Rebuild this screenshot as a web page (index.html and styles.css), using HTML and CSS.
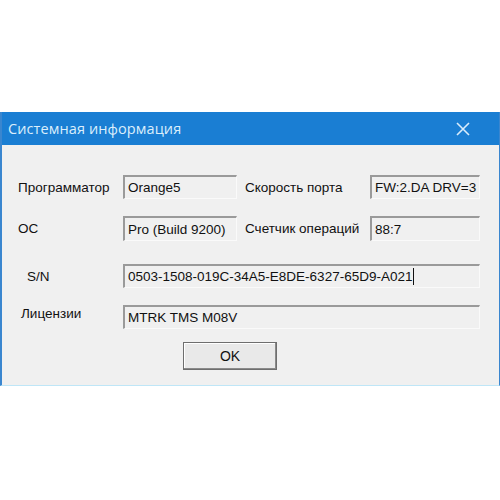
FILE: index.html
```html
<!DOCTYPE html>
<html>
<head>
<meta charset="utf-8">
<link rel="stylesheet" href="styles.css">
</head>
<body>
<div class="window">
  <div class="titlebar">
    <span class="title">Системная информация</span>
    <svg class="close" width="16" height="16" viewBox="0 0 16 16"><path d="M2 2L14 14M14 2L2 14" stroke="#d8ecfb" stroke-width="1.6" fill="none"/></svg>
  </div>
  <div class="content">
    <div class="grid">
      <div class="label l-prog">Программатор</div>
      <div class="field">Orange5</div>
      <div class="label l-right">Скорость порта</div>
      <div class="field">FW:2.DA DRV=3</div>

      <div class="label l-os">ОС</div>
      <div class="field">Pro (Build 9200)</div>
      <div class="label l-right">Счетчик операций</div>
      <div class="field">88:7</div>
    </div>
    <div class="grid grid-wide">
      <div class="label l-sn">S/N</div>
      <div class="field wide">0503-1508-019C-34A5-E8DE-6327-65D9-A021<span class="caret"></span></div>

      <div class="label l-lic">Лицензии</div>
      <div class="field wide">MTRK TMS M08V</div>
    </div>
    <div class="actions">
      <button class="btn">OK</button>
    </div>
  </div>
</div>
</body>
</html>
```

FILE: styles.css
```css
html, body {
  margin: 0;
  padding: 0;
  background: #ffffff;
}
body {
  width: 500px;
  height: 500px;
  font-family: "Liberation Sans", Arial, sans-serif;
}
.window {
  margin-top: 112px;
  width: 497px;
  border-left: 2px solid #3a86cf;
  border-right: 1px solid #3a86cf;
  border-bottom: 1px solid #bfe6f7;
  background: #f0f0f0;
}
.titlebar {
  height: 33px;
  background: #1a7ed3;
  display: flex;
  align-items: center;
  justify-content: space-between;
  padding: 0 28px 0 6px;
}
.title {
  color: #dbeefc;
  font-family: "Open Sans", "Noto Sans", sans-serif;
  font-size: 14.5px;
  letter-spacing: 0.1px;
}
.close {
  display: block;
}
.content {
  height: 240px;
  padding-top: 30px;
  box-sizing: border-box;
}
.grid {
  display: grid;
  grid-template-columns: 105px 114px 133px 110px;
  grid-template-rows: 24px 25px;
  row-gap: 17px;
  padding-left: 16px;
  font-size: 13.5px;
  color: #111;
}
.grid-wide {
  grid-template-rows: 24px 24px;
  margin-top: 23px;
}
.label {
  display: flex;
  align-items: center;
  white-space: nowrap;
}
.l-sn { padding-left: 9px; }
.l-lic { padding-left: 3px; align-items: flex-start; padding-top: 1px; }
.l-right { padding-left: 8px; }
.field {
  box-sizing: border-box;
  border-top: 2px solid #9a9a9a;
  border-left: 2px solid #9a9a9a;
  border-right: 1px solid #fafafa;
  border-bottom: 1px solid #fafafa;
  background: #f0f0f0;
  display: flex;
  align-items: center;
  padding-left: 3px;
  white-space: nowrap;
  overflow: hidden;
  font-size: 13.5px;
}
.wide {
  grid-column: 2 / 5;
}
.caret {
  display: inline-block;
  width: 1px;
  height: 17px;
  background: #111;
  margin-left: 1px;
}
.actions {
  display: flex;
  padding-left: 181px;
  margin-top: 13px;
}
.btn {
  width: 94px;
  height: 28px;
  background: #e9e9e9;
  border: 1px solid #6e6e6e;
  box-shadow: inset -1px -1px 0 #8a8a8a, inset 1px 1px 0 #ffffff;
  font-family: "Liberation Sans", Arial, sans-serif;
  font-size: 14px;
  color: #111;
  padding: 0;
}
```
